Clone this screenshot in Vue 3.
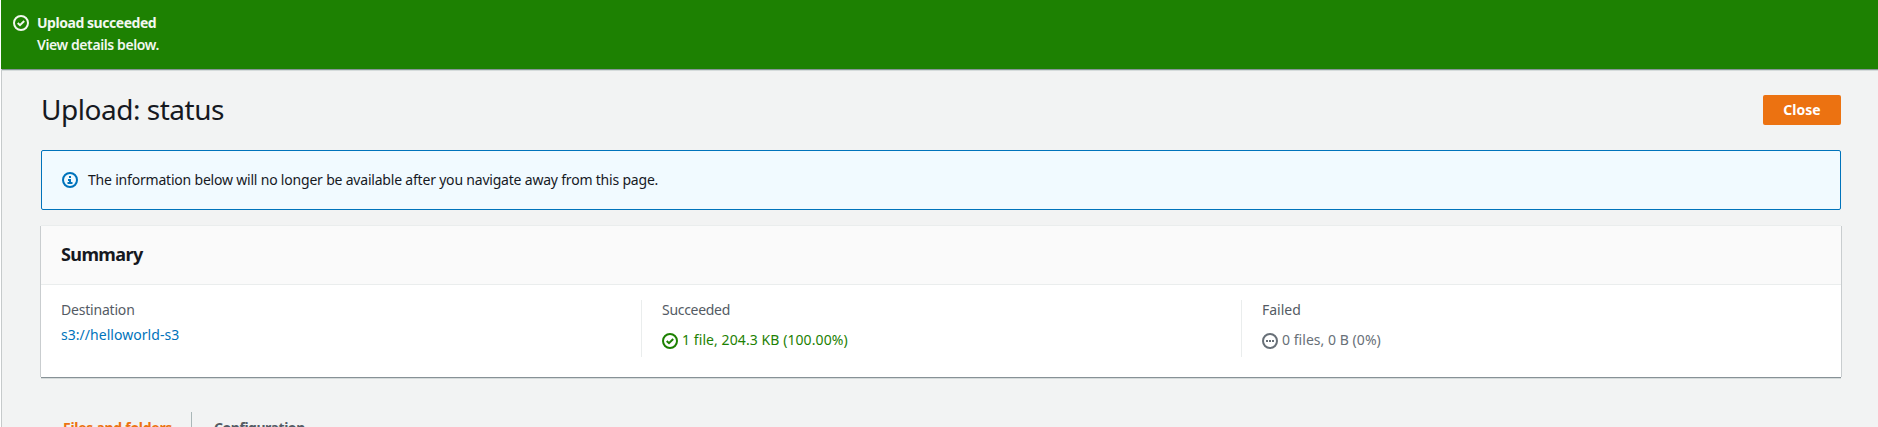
<script setup>
const metrics = [
  { label: 'Succeeded', value: '1 file, 204.3 KB (100.00%)', kind: 'success' },
  { label: 'Failed', value: '0 files, 0 B (0%)', kind: 'pending' },
]
</script>

<template>
  <div class="page">
    <header class="flash">
      <svg class="icon" viewBox="0 0 16 16">
        <circle cx="8" cy="8" r="7" />
        <path d="M4.7 8 7 10.2 11.2 6" />
      </svg>
      <div>
        <div class="flash-title">Upload succeeded</div>
        <div class="flash-text">View details below.</div>
      </div>
    </header>

    <main class="content">
      <div class="heading">
        <h1>Upload: status</h1>
        <button class="close">Close</button>
      </div>

      <div class="notice">
        <svg class="icon" viewBox="0 0 16 16">
          <circle cx="8" cy="8" r="7" />
          <path d="M8 4v2M6 8h2v3M5.5 11h5" />
        </svg>
        <span>The information below will no longer be available after you navigate away from this page.</span>
      </div>

      <section class="card">
        <h2>Summary</h2>
        <div class="columns">
          <div class="column">
            <div class="label destination">Destination</div>
            <a class="link">s3://helloworld-s3</a>
          </div>
          <div v-for="m in metrics" :key="m.label" class="column">
            <div class="label" :class="m.kind">{{ m.label }}</div>
            <div class="status" :class="m.kind">
              <svg class="icon" viewBox="0 0 16 16">
                <circle cx="8" cy="8" r="7" />
                <path v-if="m.kind === 'success'" d="M4.7 8 7 10.2 11.2 6" />
                <path v-else d="M4 8h2M7 8h2M10 8h2" />
              </svg>
              <span>{{ m.value }}</span>
            </div>
          </div>
        </div>
      </section>

      <nav class="tabs">
        <a class="tab active">Files and folders</a>
        <a class="tab">Configuration</a>
      </nav>
    </main>
  </div>
</template>

<style>
body { overflow: hidden; }
</style>

<style scoped>
* { box-sizing: border-box; }
.page {
  height: 427px;
  margin-left: 1px;
  overflow: hidden;
  background: #f2f3f3;
  color: #16191f;
  font: 14px/22px "Noto Sans", sans-serif;
}
.icon {
  width: 16px;
  height: 16px;
  flex: none;
  fill: none;
  stroke: currentColor;
  stroke-width: 2;
}
.flash {
  display: flex;
  gap: 8px;
  height: 69px;
  padding: 12px 12px 0;
  background: #1d8102;
  color: #f2f8f0;
}
.flash .icon { margin-top: 3px; }
.flash-title { font-weight: 700; letter-spacing: -0.46px; }
.flash-text { font-weight: 600; letter-spacing: -0.4px; }
.content {
  height: 358px;
  padding: 26px 37px 0 39px;
  border-left: 1px solid #c6cacb;
  box-shadow: inset 0 1px #879596, inset 0 2px #d5dbdb;
}
.heading { display: flex; justify-content: space-between; height: 55px; }
h1 {
  margin: -4px 0 0;
  font-size: 28px;
  font-weight: 400;
  line-height: 36px;
  letter-spacing: -0.48px;
}
.close {
  width: 78px;
  height: 30px;
  padding: 0;
  border: 0;
  border-radius: 2px;
  background: #ec7211;
  color: #fff;
  font: 700 14px/30px "Noto Sans", sans-serif;
}
.notice {
  display: flex;
  align-items: center;
  gap: 10px;
  height: 60px;
  padding: 0 20px;
  border: 1px solid #0073bb;
  border-radius: 2px;
  background: #f1faff;
  letter-spacing: -0.2px;
}
.notice .icon { color: #0073bb; }
.card {
  height: 151px;
  margin-top: 16px;
  background: #fff;
  box-shadow: 0 1px 0 #879196, 0 2px 0 #d5dbdb, -1px 0 0 #c9cdcf, 1px 0 0 #c9cdcf, 0 -1px 0 #eaeded;
}
h2 {
  height: 59px;
  margin: 0;
  padding: 17px 20px 0;
  border-bottom: 1px solid #eaeded;
  background: #fafafa;
  font-size: 18px;
  font-weight: 700;
  line-height: 22px;
  letter-spacing: -0.6px;
}
.columns { display: grid; grid-template-columns: repeat(3, 600px); padding-top: 15px; }
.column { height: 57px; padding-left: 20px; border-left: 1px solid transparent; }
.column:first-child { padding-left: 19px; }
.column + .column { border-color: #eaeded; }
.label { margin-top: -1px; margin-bottom: 8px; color: #545b64; }
.destination { margin-bottom: 3px; letter-spacing: -0.2px; }
.label.success { letter-spacing: -0.3px; }
.link { color: #0073bb; letter-spacing: 0.04px; }
.status { display: flex; gap: 4px; letter-spacing: 0.08px; }
.status .icon { margin-top: 4px; }
.status.success { color: #1d8102; }
.status.pending { color: #687078; letter-spacing: 0.04px; }
.tabs { display: flex; margin-top: 35px; height: 40px; }
.tab {
  padding: 5px 20px 0 22px;
  color: #545b64;
  font-weight: 700;
  letter-spacing: -0.47px;
  white-space: nowrap;
}
.tab.active { width: 151px; border-right: 1px solid #aab7b8; color: #ec7211; letter-spacing: -0.28px; }
</style>
